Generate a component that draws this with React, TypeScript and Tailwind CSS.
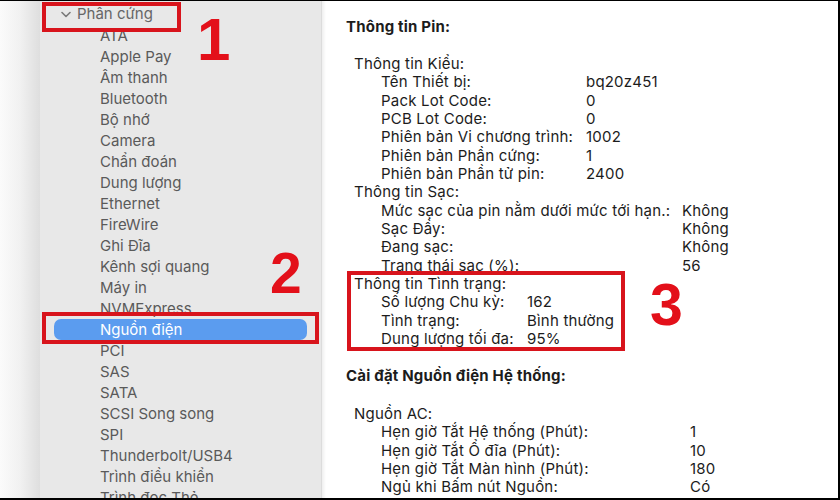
import React from "react";

const items = [
  "ATA",
  "Apple Pay",
  "Âm thanh",
  "Bluetooth",
  "Bộ nhớ",
  "Camera",
  "Chẩn đoán",
  "Dung lượng",
  "Ethernet",
  "FireWire",
  "Ghi Đĩa",
  "Kênh sợi quang",
  "Máy in",
  "NVMExpress",
  "Nguồn điện",
  "PCI",
  "SAS",
  "SATA",
  "SCSI Song song",
  "SPI",
  "Thunderbolt/USB4",
  "Trình điều khiển",
  "Trình đọc Thẻ",
];

type Row = [string, string];

function Group({
  title,
  rows,
  labelW,
}: {
  title: string;
  rows: Row[];
  labelW: number;
}) {
  return (
    <div className="flex flex-col">
      <div className="ml-[8px] h-[18.33px] leading-[18.33px] whitespace-nowrap">{title}</div>
      {rows.map(([l, v]) => (
        <div key={l} className="ml-[35px] flex h-[18.33px] leading-[18.33px]">
          <div style={{ width: labelW }} className="shrink-0 whitespace-nowrap">
            {l}
          </div>
          <div className="whitespace-nowrap">{v}</div>
        </div>
      ))}
    </div>
  );
}

export default function App() {
  return (
    <div
      className="relative w-[840px] h-[500px] overflow-hidden border-t border-r-2 border-b-2 border-black bg-white"
      style={{ fontFamily: "Inter, 'Noto Sans', sans-serif" }}
    >
      <div className="flex h-full">
        {/* left gradient strip */}
        <div className="w-[40px] shrink-0 bg-gradient-to-r from-[#fbfbfb] via-[#f1f1f1] to-[#dedede]" />
        {/* sidebar */}
        <div className="w-[282px] shrink-0 bg-[#e8e8e8] border-r border-[#dcdcdc] pt-[3px] text-[15px] text-[#5a5a5a]">
          <div className="flex h-[21px] items-center">
            <svg
              width="10"
              height="7"
              viewBox="0 0 10 7"
              className="ml-[21px] mr-[6px]"
            >
              <path
                d="M1 1.5 L5 5.5 L9 1.5"
                fill="none"
                stroke="#7a7a7a"
                strokeWidth="1.6"
                strokeLinecap="round"
                strokeLinejoin="round"
              />
            </svg>
            <span className="text-[#666666]">Phần cứng</span>
          </div>
          {items.map((it) =>
            it === "Nguồn điện" ? (
              <div
                key={it}
                className="mx-[14px] h-[21px] leading-[21px] rounded-[7px] bg-[#5b9cef] pl-[46px] text-white"
              >
                {it}
              </div>
            ) : (
              <div key={it} className="h-[21px] leading-[21px] pl-[60px] whitespace-nowrap">
                {it}
              </div>
            )
          )}
        </div>
        {/* divider shade */}
        <div className="w-[4px] shrink-0 bg-gradient-to-r from-[#efefef] to-white" />
        {/* content */}
        <div className="flex-1 pl-[20px] pt-[17px] text-[15px] tracking-[0.2px] text-[#1c1c1c]">
          <div className="h-[18.33px] leading-[18.33px] font-bold">Thông tin Pin:</div>
          <div className="mt-[18.7px]">
            <Group
              title="Thông tin Kiểu:"
              labelW={205}
              rows={[
                ["Tên Thiết bị:", "bq20z451"],
                ["Pack Lot Code:", "0"],
                ["PCB Lot Code:", "0"],
                ["Phiên bản Vi chương trình:", "1002"],
                ["Phiên bản Phần cứng:", "1"],
                ["Phiên bản Phần tử pin:", "2400"],
              ]}
            />
            <Group
              title="Thông tin Sạc:"
              labelW={301}
              rows={[
                ["Mức sạc của pin nằm dưới mức tới hạn.:", "Không"],
                ["Sạc Đầy:", "Không"],
                ["Đang sạc:", "Không"],
                ["Trạng thái sạc (%):", "56"],
              ]}
            />
            <Group
              title="Thông tin Tình trạng:"
              labelW={146}
              rows={[
                ["Số lượng Chu kỳ:", "162"],
                ["Tình trạng:", "Bình thường"],
                ["Dung lượng tối đa:", "95%"],
              ]}
            />
          </div>
          <div className="mt-[18.7px] h-[18.33px] leading-[18.33px] font-bold">
            Cài đặt Nguồn điện Hệ thống:
          </div>
          <div className="mt-[19.7px]">
            <Group
              title="Nguồn AC:"
              labelW={309}
              rows={[
                ["Hẹn giờ Tắt Hệ thống (Phút):", "1"],
                ["Hẹn giờ Tắt Ổ đĩa (Phút):", "10"],
                ["Hẹn giờ Tắt Màn hình (Phút):", "180"],
                ["Ngủ khi Bấm nút Nguồn:", "Có"],
                ["Đánh thức khi:", "Có"],
              ]}
            />
          </div>
        </div>
      </div>

      {/* annotations */}
      <div className="absolute left-[42px] top-[1px] w-[139px] h-[30px] border-[4px] border-[#d8141c]" />
      <div className="absolute left-[42px] top-[311px] w-[277px] h-[32px] border-[4px] border-[#d8141c]" />
      <div className="absolute left-[347px] top-[270px] w-[278px] h-[80px] border-[4px] border-[#d8141c]" />
      <div
        className="absolute left-[197px] top-[9px] text-[60px] leading-none font-bold text-[#e3101a]"
        style={{ fontFamily: "'Liberation Sans', Arial, sans-serif" }}
      >
        1
      </div>
      <div
        className="absolute left-[270px] top-[244px] text-[57px] leading-none font-bold text-[#e3101a]"
        style={{ fontFamily: "'Liberation Sans', Arial, sans-serif" }}
      >
        2
      </div>
      <div
        className="absolute left-[650px] top-[275px] text-[59px] leading-none font-bold text-[#e3101a]"
        style={{ fontFamily: "'Liberation Sans', Arial, sans-serif" }}
      >
        3
      </div>
    </div>
  );
}
